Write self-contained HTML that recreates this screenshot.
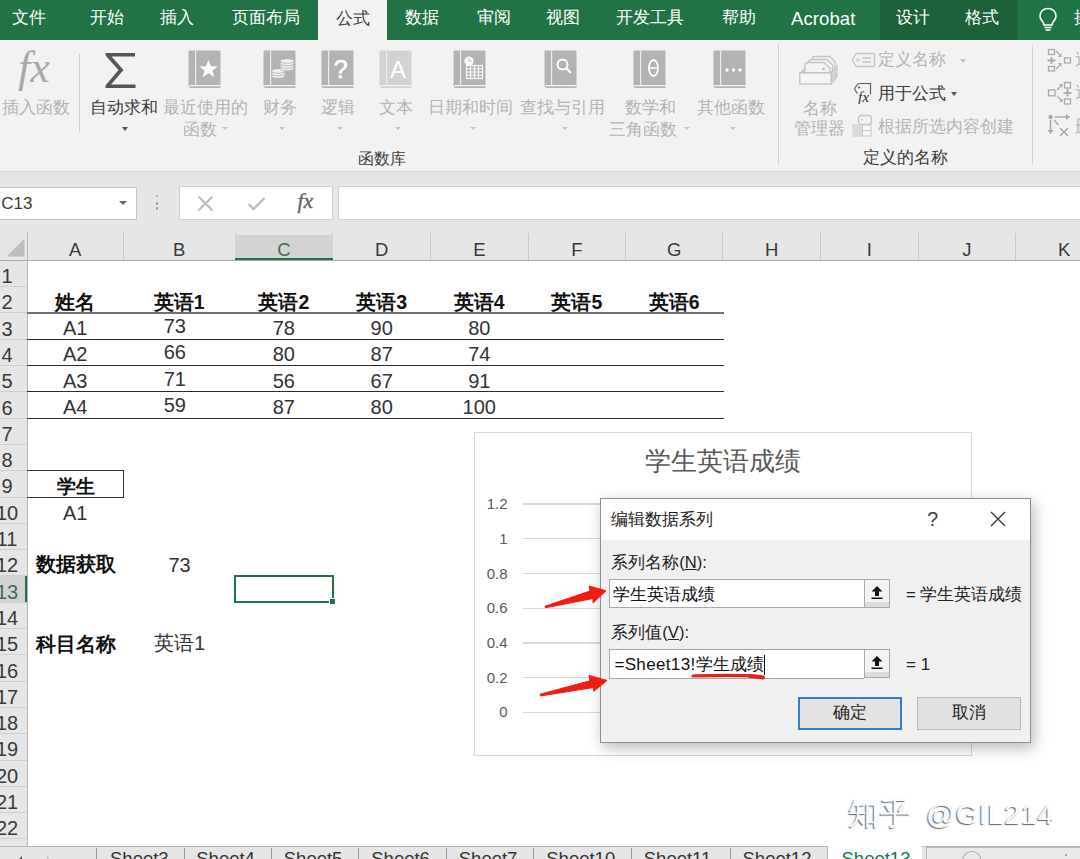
<!DOCTYPE html>
<html><head><meta charset="utf-8"><style>
html,body{margin:0;padding:0;}
body{width:1080px;height:859px;overflow:hidden;position:relative;background:#fff;font-family:'Liberation Sans',sans-serif;}
</style></head><body>
<div style="position:absolute;left:0px;top:0px;width:1080px;height:40px;background:#217346"></div>
<div style="position:absolute;left:879.5px;top:0px;width:137.5px;height:40px;background:#1c6139"></div>
<div style="position:absolute;left:318px;top:0px;width:69px;height:41px;background:#f3f2f2"></div>
<div style="position:absolute;left:11.7px;top:8.10px;font-size:17px;line-height:20.40px;color:#fff;font-weight:normal;white-space:nowrap;">文件</div>
<div style="position:absolute;left:90px;top:8.10px;font-size:17px;line-height:20.40px;color:#fff;font-weight:normal;white-space:nowrap;">开始</div>
<div style="position:absolute;left:160px;top:8.10px;font-size:17px;line-height:20.40px;color:#fff;font-weight:normal;white-space:nowrap;">插入</div>
<div style="position:absolute;left:231.7px;top:8.10px;font-size:17px;line-height:20.40px;color:#fff;font-weight:normal;white-space:nowrap;">页面布局</div>
<div style="position:absolute;left:405px;top:8.10px;font-size:17px;line-height:20.40px;color:#fff;font-weight:normal;white-space:nowrap;">数据</div>
<div style="position:absolute;left:476.7px;top:8.10px;font-size:17px;line-height:20.40px;color:#fff;font-weight:normal;white-space:nowrap;">审阅</div>
<div style="position:absolute;left:546px;top:8.10px;font-size:17px;line-height:20.40px;color:#fff;font-weight:normal;white-space:nowrap;">视图</div>
<div style="position:absolute;left:616px;top:8.10px;font-size:17px;line-height:20.40px;color:#fff;font-weight:normal;white-space:nowrap;">开发工具</div>
<div style="position:absolute;left:721.7px;top:8.10px;font-size:17px;line-height:20.40px;color:#fff;font-weight:normal;white-space:nowrap;">帮助</div>
<div style="position:absolute;left:895.7px;top:8.10px;font-size:17px;line-height:20.40px;color:#fff;font-weight:normal;white-space:nowrap;">设计</div>
<div style="position:absolute;left:965px;top:8.10px;font-size:17px;line-height:20.40px;color:#fff;font-weight:normal;white-space:nowrap;">格式</div>
<div style="position:absolute;left:1074px;top:8.10px;font-size:17px;line-height:20.40px;color:#fff;font-weight:normal;white-space:nowrap;">操</div>
<div style="position:absolute;left:791px;top:7.70px;font-size:18.5px;line-height:22.20px;color:#fff;font-weight:normal;white-space:nowrap;letter-spacing:0.1px;">Acrobat</div>
<div style="position:absolute;left:335.5px;top:9.40px;font-size:16.5px;line-height:19.80px;color:#3a4a42;font-weight:normal;white-space:nowrap;">公式</div>
<svg style="position:absolute;left:1038px;top:7px;" width="20" height="24" viewBox="0 0 20 24"><path d="M10 1.5 C5 1.5 2 5 2 9 C2 12.5 4.5 14 5.5 16 L6 18 L14 18 L14.5 16 C15.5 14 18 12.5 18 9 C18 5 15 1.5 10 1.5 Z" fill="none" stroke="#fff" stroke-width="1.6"/><path d="M6.5 20.5 H13.5 M7.5 23 H12.5" stroke="#fff" stroke-width="1.6"/></svg>
<div style="position:absolute;left:0px;top:40px;width:1080px;height:131px;background:#f3f2f2"></div>
<div style="position:absolute;left:0px;top:171px;width:1080px;height:1px;background:#d5d5d5"></div>
<div style="position:absolute;left:18px;top:41.60px;font-size:44px;line-height:52.80px;color:#a8a8a8;font-weight:normal;white-space:nowrap;font-family:'Liberation Serif',serif;"><i>fx</i></div>
<div style="position:absolute;left:1.7px;top:97.80px;font-size:17px;line-height:20.40px;color:#b4b4b4;font-weight:normal;white-space:nowrap;">插入函数</div>
<div style="position:absolute;left:79px;top:54px;width:1px;height:78px;background:#d2d2d2"></div>
<svg style="position:absolute;left:104px;top:52px;" width="33" height="37" viewBox="0 0 33 37"><path d="M1.5 1 H31 V4.5 H7.5 L19.5 18 L7 32.5 H31.5 V36 H1.5 V33.5 L14.5 18 L1.5 3.5 Z" fill="#555"/></svg>
<div style="position:absolute;left:90px;top:98.10px;font-size:16.5px;line-height:19.80px;color:#3c3c3c;font-weight:normal;white-space:nowrap;">自动求和</div>
<div style="position:absolute;left:121.5px;top:126.5px;width:0;height:0;border-left:3.5px solid transparent;border-right:3.5px solid transparent;border-top:4px solid #555;"></div>
<svg style="position:absolute;left:187.5px;top:50px;" width="33" height="39" viewBox="0 0 33 39"><rect x="0.5" y="0.5" width="32" height="36" rx="1" fill="#b3b3b3"/><rect x="7" y="0.5" width="1.2" height="36" fill="#ececec"/><rect x="1.5" y="35" width="31" height="1.3" fill="#f4f4f4"/><rect x="1.5" y="36.5" width="31" height="1.5" fill="#b3b3b3"/><path d="M20.5 10 L23 16.3 L29.5 16.5 L24.5 20.6 L26.3 27 L20.5 23.3 L14.7 27 L16.5 20.6 L11.5 16.5 L18 16.3 Z" fill="#fff"/></svg>
<svg style="position:absolute;left:263px;top:50px;" width="33" height="39" viewBox="0 0 33 39"><rect x="0.5" y="0.5" width="32" height="36" rx="1" fill="#b3b3b3"/><rect x="7" y="0.5" width="1.2" height="36" fill="#ececec"/><rect x="1.5" y="35" width="31" height="1.3" fill="#f4f4f4"/><rect x="1.5" y="36.5" width="31" height="1.5" fill="#b3b3b3"/><ellipse cx="15.3" cy="26" rx="6.8" ry="2.3" fill="#f2f2f2" stroke="#b3b3b3" stroke-width="0.9"/><ellipse cx="15.3" cy="23.5" rx="6.8" ry="2.3" fill="#f2f2f2" stroke="#b3b3b3" stroke-width="0.9"/><ellipse cx="15.3" cy="21" rx="6.8" ry="2.3" fill="#f2f2f2" stroke="#b3b3b3" stroke-width="0.9"/><ellipse cx="24" cy="18.5" rx="7" ry="2.3" fill="#f2f2f2" stroke="#b3b3b3" stroke-width="0.9"/><ellipse cx="24" cy="16" rx="7" ry="2.3" fill="#f2f2f2" stroke="#b3b3b3" stroke-width="0.9"/><ellipse cx="24" cy="13.5" rx="7" ry="2.3" fill="#f2f2f2" stroke="#b3b3b3" stroke-width="0.9"/><ellipse cx="24" cy="11" rx="7" ry="2.3" fill="#f2f2f2" stroke="#b3b3b3" stroke-width="0.9"/></svg>
<svg style="position:absolute;left:320.8px;top:50px;" width="33" height="39" viewBox="0 0 33 39"><rect x="0.5" y="0.5" width="32" height="36" rx="1" fill="#b3b3b3"/><rect x="7" y="0.5" width="1.2" height="36" fill="#ececec"/><rect x="1.5" y="35" width="31" height="1.3" fill="#f4f4f4"/><rect x="1.5" y="36.5" width="31" height="1.5" fill="#b3b3b3"/><text x="19.6" y="28" font-family="Liberation Sans" font-weight="normal" font-size="25" fill="#fff" stroke="#fff" stroke-width="0.6" text-anchor="middle">?</text></svg>
<svg style="position:absolute;left:379px;top:50px;" width="33" height="39" viewBox="0 0 33 39"><rect x="0.5" y="0.5" width="32" height="36" rx="1" fill="#d2d2d2"/><rect x="7" y="0.5" width="1.2" height="36" fill="#ececec"/><rect x="1.5" y="35" width="31" height="1.3" fill="#f4f4f4"/><rect x="1.5" y="36.5" width="31" height="1.5" fill="#d2d2d2"/><text x="19" y="27.8" font-family="Liberation Sans" font-size="24" fill="#fff" text-anchor="middle">A</text></svg>
<svg style="position:absolute;left:453.3px;top:50px;" width="33" height="39" viewBox="0 0 33 39"><rect x="0.5" y="0.5" width="32" height="36" rx="1" fill="#b3b3b3"/><rect x="7" y="0.5" width="1.2" height="36" fill="#ececec"/><rect x="1.5" y="35" width="31" height="1.3" fill="#f4f4f4"/><rect x="1.5" y="36.5" width="31" height="1.5" fill="#b3b3b3"/><g stroke="#fff" stroke-width="1.1" fill="none"><rect x="13.5" y="15.5" width="16" height="13"/><path d="M13.5 18.8 H29.5 M13.5 22 H29.5 M13.5 25.2 H29.5 M17.5 15.5 V28.5 M21.5 15.5 V28.5 M25.5 15.5 V28.5"/></g><circle cx="16" cy="11" r="4.6" fill="#fff"/><path d="M16 8 V11 H18.5" stroke="#b3b3b3" stroke-width="1" fill="none"/></svg>
<svg style="position:absolute;left:544px;top:50px;" width="33" height="39" viewBox="0 0 33 39"><rect x="0.5" y="0.5" width="32" height="36" rx="1" fill="#b3b3b3"/><rect x="7" y="0.5" width="1.2" height="36" fill="#ececec"/><rect x="1.5" y="35" width="31" height="1.3" fill="#f4f4f4"/><rect x="1.5" y="36.5" width="31" height="1.5" fill="#b3b3b3"/><circle cx="18.5" cy="14.5" r="5" fill="none" stroke="#fff" stroke-width="2"/><path d="M22 18 L27 23" stroke="#fff" stroke-width="2.2"/></svg>
<svg style="position:absolute;left:633.3px;top:50px;" width="33" height="39" viewBox="0 0 33 39"><rect x="0.5" y="0.5" width="32" height="36" rx="1" fill="#b3b3b3"/><rect x="7" y="0.5" width="1.2" height="36" fill="#ececec"/><rect x="1.5" y="35" width="31" height="1.3" fill="#f4f4f4"/><rect x="1.5" y="36.5" width="31" height="1.5" fill="#b3b3b3"/><ellipse cx="20.5" cy="18" rx="4.5" ry="8" fill="none" stroke="#fff" stroke-width="1.8"/><path d="M16.5 18 H24.5" stroke="#fff" stroke-width="1.5"/></svg>
<svg style="position:absolute;left:713.3px;top:50px;" width="33" height="39" viewBox="0 0 33 39"><rect x="0.5" y="0.5" width="32" height="36" rx="1" fill="#b3b3b3"/><rect x="7" y="0.5" width="1.2" height="36" fill="#ececec"/><rect x="1.5" y="35" width="31" height="1.3" fill="#f4f4f4"/><rect x="1.5" y="36.5" width="31" height="1.5" fill="#b3b3b3"/><circle cx="14" cy="20" r="1.7" fill="#fff"/><circle cx="20.5" cy="20" r="1.7" fill="#fff"/><circle cx="27" cy="20" r="1.7" fill="#fff"/></svg>
<div style="position:absolute;left:162.5px;top:98.04px;font-size:16.6px;line-height:19.92px;color:#b4b4b4;font-weight:normal;white-space:nowrap;">最近使用的</div>
<div style="position:absolute;left:182.5px;top:119.70px;font-size:16.5px;line-height:19.80px;color:#b4b4b4;font-weight:normal;white-space:nowrap;">函数</div>
<div style="position:absolute;left:222.0px;top:126.8px;width:0;height:0;border-left:3.0px solid transparent;border-right:3.0px solid transparent;border-top:3.5px solid #c4c4c4;"></div>
<div style="position:absolute;left:263.3px;top:98.10px;font-size:16.5px;line-height:19.80px;color:#b4b4b4;font-weight:normal;white-space:nowrap;">财务</div>
<div style="position:absolute;left:279.0px;top:126.8px;width:0;height:0;border-left:3.0px solid transparent;border-right:3.0px solid transparent;border-top:3.5px solid #c4c4c4;"></div>
<div style="position:absolute;left:320.8px;top:98.10px;font-size:16.5px;line-height:19.80px;color:#b4b4b4;font-weight:normal;white-space:nowrap;">逻辑</div>
<div style="position:absolute;left:337.0px;top:126.8px;width:0;height:0;border-left:3.0px solid transparent;border-right:3.0px solid transparent;border-top:3.5px solid #c4c4c4;"></div>
<div style="position:absolute;left:379px;top:98.10px;font-size:16.5px;line-height:19.80px;color:#b4b4b4;font-weight:normal;white-space:nowrap;">文本</div>
<div style="position:absolute;left:395.0px;top:126.8px;width:0;height:0;border-left:3.0px solid transparent;border-right:3.0px solid transparent;border-top:3.5px solid #c4c4c4;"></div>
<div style="position:absolute;left:428px;top:97.98px;font-size:16.7px;line-height:20.04px;color:#b4b4b4;font-weight:normal;white-space:nowrap;">日期和时间</div>
<div style="position:absolute;left:469.5px;top:126.8px;width:0;height:0;border-left:3.0px solid transparent;border-right:3.0px solid transparent;border-top:3.5px solid #c4c4c4;"></div>
<div style="position:absolute;left:520px;top:98.10px;font-size:16.5px;line-height:19.80px;color:#b4b4b4;font-weight:normal;white-space:nowrap;">查找与引用</div>
<div style="position:absolute;left:561.7px;top:126.8px;width:0;height:0;border-left:3.0px solid transparent;border-right:3.0px solid transparent;border-top:3.5px solid #c4c4c4;"></div>
<div style="position:absolute;left:625px;top:98.10px;font-size:16.5px;line-height:19.80px;color:#b4b4b4;font-weight:normal;white-space:nowrap;">数学和</div>
<div style="position:absolute;left:609px;top:119.58px;font-size:16.7px;line-height:20.04px;color:#b4b4b4;font-weight:normal;white-space:nowrap;">三角函数</div>
<div style="position:absolute;left:683.7px;top:126.8px;width:0;height:0;border-left:3.0px solid transparent;border-right:3.0px solid transparent;border-top:3.5px solid #c4c4c4;"></div>
<div style="position:absolute;left:696.7px;top:98.04px;font-size:16.6px;line-height:19.92px;color:#b4b4b4;font-weight:normal;white-space:nowrap;">其他函数</div>
<div style="position:absolute;left:730.3px;top:126.8px;width:0;height:0;border-left:3.0px solid transparent;border-right:3.0px solid transparent;border-top:3.5px solid #c4c4c4;"></div>
<div style="position:absolute;left:357.5px;top:149.36px;font-size:16.4px;line-height:19.68px;color:#3c3c3c;font-weight:normal;white-space:nowrap;">函数库</div>
<div style="position:absolute;left:778px;top:44px;width:1px;height:121px;background:#d2d2d2"></div>
<svg style="position:absolute;left:795px;top:50px;" width="45" height="38" viewBox="0 0 45 38"><g fill="#f4f3f4" stroke="#c4c4c4" stroke-width="1.3" stroke-linejoin="round"><path d="M17 20 V9.5 Q17 6.5 20 6.5 H35 L40 12 V20 Z"/><path d="M13.5 22 V12.5 Q13.5 9.5 16.5 9.5 H32 L37.5 15 V22 Z"/><path d="M10 23 V15.5 Q10 12.5 13 12.5 H29 L35 18.5 V23 Z"/></g><circle cx="28.5" cy="19" r="1.3" fill="#b5b5b5"/><path d="M5 23 L9.5 17.5 V23 Z" fill="#c4c4c4"/><rect x="4.8" y="23" width="31.5" height="11" fill="#f6f5f6" stroke="#c4c4c4" stroke-width="1.3"/><path d="M36.3 23 L42 15.5 V27.5 L36.3 34 Z" fill="#d2d2d2" stroke="#c4c4c4" stroke-width="1"/></svg>
<div style="position:absolute;left:802.5px;top:98.54px;font-size:16.6px;line-height:19.92px;color:#b4b4b4;font-weight:normal;white-space:nowrap;">名称</div>
<div style="position:absolute;left:794px;top:118.54px;font-size:16.6px;line-height:19.92px;color:#b4b4b4;font-weight:normal;white-space:nowrap;">管理器</div>
<svg style="position:absolute;left:851px;top:52px;" width="25" height="17" viewBox="0 0 25 17"><path d="M7 1.5 H22 Q23.5 1.5 23.5 3 V13 Q23.5 14.5 22 14.5 H7 Q5.5 14.5 4.5 13.5 L1.8 9 Q1.3 8 1.8 7 L4.5 2.5 Q5.5 1.5 7 1.5 Z" fill="none" stroke="#c6c6c6" stroke-width="1.4"/><circle cx="6.8" cy="8" r="1.3" fill="none" stroke="#c6c6c6" stroke-width="1"/><path d="M11 6 H20 M11 10 H20" stroke="#c6c6c6" stroke-width="1.3"/></svg>
<div style="position:absolute;left:878.3px;top:50.42px;font-size:16.8px;line-height:20.16px;color:#b4b4b4;font-weight:normal;white-space:nowrap;">定义名称</div>
<div style="position:absolute;left:959.5px;top:58.5px;width:0;height:0;border-left:3.5px solid transparent;border-right:3.5px solid transparent;border-top:4px solid #c4c4c4;"></div>
<svg style="position:absolute;left:853px;top:81px;" width="22" height="23" viewBox="0 0 22 23"><path d="M17.5 13.5 V2.5 H6.5 Q5 2.5 4 4 L2 7 Q1.5 8 2 9 L4.5 12.5" fill="none" stroke="#5a5a5a" stroke-width="1.2"/><circle cx="6" cy="6.5" r="1.1" fill="#5a5a5a"/><text x="5" y="20.5" font-family="Liberation Serif" font-style="italic" font-size="15.5" fill="#333">fx</text></svg>
<div style="position:absolute;left:878.3px;top:84.22px;font-size:16.8px;line-height:20.16px;color:#3c3c3c;font-weight:normal;white-space:nowrap;">用于公式</div>
<div style="position:absolute;left:950.5px;top:91.5px;width:0;height:0;border-left:3.5px solid transparent;border-right:3.5px solid transparent;border-top:4px solid #555;"></div>
<svg style="position:absolute;left:852px;top:114px;" width="22" height="24" viewBox="0 0 22 24"><rect x="6.5" y="1.5" width="13" height="9" rx="3" fill="#f3f3f3" stroke="#c6c6c6" stroke-width="1.3"/><circle cx="9.8" cy="5.5" r="1" fill="#c6c6c6"/><rect x="1" y="11" width="18" height="11" fill="#f6f6f6" stroke="#c8c8c8" stroke-width="1"/><rect x="1.5" y="11.5" width="9" height="10" fill="#d9d9d9"/><path d="M10.5 11 V22 M10.5 16.5 H19" stroke="#c8c8c8" stroke-width="1"/></svg>
<div style="position:absolute;left:878px;top:117.42px;font-size:16.8px;line-height:20.16px;color:#b4b4b4;font-weight:normal;white-space:nowrap;">根据所选内容创建</div>
<div style="position:absolute;left:862.5px;top:148.22px;font-size:16.8px;line-height:20.16px;color:#3c3c3c;font-weight:normal;white-space:nowrap;">定义的名称</div>
<div style="position:absolute;left:1032px;top:45px;width:1px;height:120px;background:#d2d2d2"></div>
<svg style="position:absolute;left:1044px;top:44px;" width="31" height="96" viewBox="0 0 31 96"><g fill="none" stroke="#a9a9a9" stroke-width="1.3"><rect x="4.5" y="5.5" width="6" height="5"/><rect x="4.5" y="22.5" width="6" height="4.5"/><rect x="20.5" y="14" width="6" height="5"/><path d="M3.5 16.5 H11.5 M7.5 13 V20" stroke-width="1.8"/><path d="M12 7 L17 12 M12 25 L17 20"/><rect x="4.5" y="46" width="6.5" height="5.8"/><rect x="20.5" y="38.5" width="6" height="5.5"/><rect x="20.5" y="55" width="6" height="5"/><path d="M19.5 48.8 H27.5 M23.5 45 V52.5" stroke-width="1.8"/><path d="M13 46 L18 41 M13 52 L18 57"/><path d="M11 73 H23 M6.5 76 V88 M10 76 L14.5 81 M16 84 L24 92 M24 84 L16 92" stroke-width="1.5"/></g><g fill="#a9a9a9"><path d="M17.5 9.5 V13 H14 Z M17.5 22.5 V19 H14 Z M18.5 43.5 V40 H15 Z M18.5 54.5 V58 H15 Z M22 70 L26 73 L22 76 Z M3.5 86 H9.5 L6.5 90 Z"/><circle cx="6.5" cy="73" r="2.2"/></g></svg>
<div style="position:absolute;left:1075px;top:49.80px;font-size:17px;line-height:20.40px;color:#b4b4b4;font-weight:normal;white-space:nowrap;">追</div>
<div style="position:absolute;left:1075px;top:82.80px;font-size:17px;line-height:20.40px;color:#b4b4b4;font-weight:normal;white-space:nowrap;">追</div>
<div style="position:absolute;left:1075px;top:116.80px;font-size:17px;line-height:20.40px;color:#b4b4b4;font-weight:normal;white-space:nowrap;">删</div>
<div style="position:absolute;left:0px;top:172px;width:1080px;height:88px;background:#e6e6e6"></div>
<div style="position:absolute;left:-1px;top:186.5px;width:137.5px;height:33.5px;background:#fff;box-sizing:border-box;border:1px solid #c6c6c6"></div>
<div style="position:absolute;left:1.2px;top:194.10px;font-size:17px;line-height:20.40px;color:#3a3a3a;font-weight:normal;white-space:nowrap;">C13</div>
<div style="position:absolute;left:119.3px;top:200.8px;width:0;height:0;border-left:4.0px solid transparent;border-right:4.0px solid transparent;border-top:4.5px solid #666;"></div>
<div style="position:absolute;left:155.5px;top:194.8px;width:2.5px;height:2.5px;background:#9a9a9a;border-radius:50%"></div>
<div style="position:absolute;left:155.5px;top:202.3px;width:2.5px;height:2.5px;background:#9a9a9a;border-radius:50%"></div>
<div style="position:absolute;left:155.5px;top:207.3px;width:2.5px;height:2.5px;background:#9a9a9a;border-radius:50%"></div>
<div style="position:absolute;left:179.3px;top:186.3px;width:153.3px;height:34px;background:#fff;box-sizing:border-box;border:1px solid #d0d0d0"></div>
<svg style="position:absolute;left:197px;top:195px;" width="17" height="17" viewBox="0 0 17 17"><path d="M1.5 1.5 L15.5 15.5 M15.5 1.5 L1.5 15.5" stroke="#b9b9b9" stroke-width="1.8"/></svg>
<svg style="position:absolute;left:247px;top:196px;" width="19" height="15" viewBox="0 0 19 15"><path d="M1.5 8 L6.5 13 L17.5 2" fill="none" stroke="#bdbdbd" stroke-width="2.4"/></svg>
<div style="position:absolute;left:297.5px;top:188.90px;font-size:21.5px;line-height:25.80px;color:#666;font-weight:normal;white-space:nowrap;font-family:'Liberation Serif',serif;-webkit-text-stroke:0.4px #666;"><i>fx</i></div>
<div style="position:absolute;left:337.6px;top:186.3px;width:750px;height:34px;background:#fff;box-sizing:border-box;border:1px solid #d0d0d0"></div>
<div style="position:absolute;left:27.5px;top:260.8px;width:1060px;height:585px;background:#fff"></div>
<div style="position:absolute;left:122.9px;top:233px;width:1px;height:27px;background:#c9c9c9"></div>
<div style="position:absolute;left:234.5px;top:233px;width:1px;height:27px;background:#c9c9c9"></div>
<div style="position:absolute;left:332.2px;top:233px;width:1px;height:27px;background:#c9c9c9"></div>
<div style="position:absolute;left:430.1px;top:233px;width:1px;height:27px;background:#c9c9c9"></div>
<div style="position:absolute;left:527.5px;top:233px;width:1px;height:27px;background:#c9c9c9"></div>
<div style="position:absolute;left:625.2px;top:233px;width:1px;height:27px;background:#c9c9c9"></div>
<div style="position:absolute;left:722.4px;top:233px;width:1px;height:27px;background:#c9c9c9"></div>
<div style="position:absolute;left:819.8px;top:233px;width:1px;height:27px;background:#c9c9c9"></div>
<div style="position:absolute;left:917.7px;top:233px;width:1px;height:27px;background:#c9c9c9"></div>
<div style="position:absolute;left:1014.9px;top:233px;width:1px;height:27px;background:#c9c9c9"></div>
<div style="position:absolute;left:235px;top:235px;width:97.7px;height:25px;background:#d3d3d3"></div>
<div style="position:absolute;left:235px;top:258.3px;width:97.7px;height:2px;background:#217346"></div>
<div style="position:absolute;left:45.2px;top:238.90px;font-size:18.5px;line-height:22.20px;color:#3a3a3a;font-weight:normal;white-space:nowrap;width:60px;text-align:center;">A</div>
<div style="position:absolute;left:149.2px;top:238.90px;font-size:18.5px;line-height:22.20px;color:#3a3a3a;font-weight:normal;white-space:nowrap;width:60px;text-align:center;">B</div>
<div style="position:absolute;left:253.85000000000002px;top:238.90px;font-size:18.5px;line-height:22.20px;color:#3b6e55;font-weight:normal;white-space:nowrap;width:60px;text-align:center;">C</div>
<div style="position:absolute;left:351.65px;top:238.90px;font-size:18.5px;line-height:22.20px;color:#3a3a3a;font-weight:normal;white-space:nowrap;width:60px;text-align:center;">D</div>
<div style="position:absolute;left:449.3px;top:238.90px;font-size:18.5px;line-height:22.20px;color:#3a3a3a;font-weight:normal;white-space:nowrap;width:60px;text-align:center;">E</div>
<div style="position:absolute;left:546.85px;top:238.90px;font-size:18.5px;line-height:22.20px;color:#3a3a3a;font-weight:normal;white-space:nowrap;width:60px;text-align:center;">F</div>
<div style="position:absolute;left:644.3px;top:238.90px;font-size:18.5px;line-height:22.20px;color:#3a3a3a;font-weight:normal;white-space:nowrap;width:60px;text-align:center;">G</div>
<div style="position:absolute;left:741.5999999999999px;top:238.90px;font-size:18.5px;line-height:22.20px;color:#3a3a3a;font-weight:normal;white-space:nowrap;width:60px;text-align:center;">H</div>
<div style="position:absolute;left:839.25px;top:238.90px;font-size:18.5px;line-height:22.20px;color:#3a3a3a;font-weight:normal;white-space:nowrap;width:60px;text-align:center;">I</div>
<div style="position:absolute;left:936.8px;top:238.90px;font-size:18.5px;line-height:22.20px;color:#3a3a3a;font-weight:normal;white-space:nowrap;width:60px;text-align:center;">J</div>
<div style="position:absolute;left:1034.2px;top:238.90px;font-size:18.5px;line-height:22.20px;color:#3a3a3a;font-weight:normal;white-space:nowrap;width:60px;text-align:center;">K</div>
<div style="position:absolute;left:0px;top:259.8px;width:1080px;height:1px;background:#a8a8a8"></div>
<svg style="position:absolute;left:6px;top:238px;" width="19" height="19" viewBox="0 0 19 19"><path d="M18.5 0.5 V18.5 H0.5 Z" fill="#bdbdbd"/></svg>
<div style="position:absolute;left:0px;top:260.8px;width:27px;height:585px;background:#e6e6e6"></div>
<div style="position:absolute;left:26.6px;top:232px;width:1px;height:614px;background:#b5b5b5"></div>
<div style="position:absolute;left:0px;top:286.1px;width:26.6px;height:1px;background:#cfcfcf"></div>
<div style="position:absolute;left:-22px;top:264.05px;font-size:20px;line-height:24.00px;color:#3a3a3a;font-weight:normal;white-space:nowrap;width:58px;text-align:center;">1</div>
<div style="position:absolute;left:0px;top:312.40000000000003px;width:26.6px;height:1px;background:#cfcfcf"></div>
<div style="position:absolute;left:-22px;top:290.35px;font-size:20px;line-height:24.00px;color:#3a3a3a;font-weight:normal;white-space:nowrap;width:58px;text-align:center;">2</div>
<div style="position:absolute;left:0px;top:338.70000000000005px;width:26.6px;height:1px;background:#cfcfcf"></div>
<div style="position:absolute;left:-22px;top:316.65px;font-size:20px;line-height:24.00px;color:#3a3a3a;font-weight:normal;white-space:nowrap;width:58px;text-align:center;">3</div>
<div style="position:absolute;left:0px;top:365.00000000000006px;width:26.6px;height:1px;background:#cfcfcf"></div>
<div style="position:absolute;left:-22px;top:342.95px;font-size:20px;line-height:24.00px;color:#3a3a3a;font-weight:normal;white-space:nowrap;width:58px;text-align:center;">4</div>
<div style="position:absolute;left:0px;top:391.3px;width:26.6px;height:1px;background:#cfcfcf"></div>
<div style="position:absolute;left:-22px;top:369.25px;font-size:20px;line-height:24.00px;color:#3a3a3a;font-weight:normal;white-space:nowrap;width:58px;text-align:center;">5</div>
<div style="position:absolute;left:0px;top:417.6px;width:26.6px;height:1px;background:#cfcfcf"></div>
<div style="position:absolute;left:-22px;top:395.55px;font-size:20px;line-height:24.00px;color:#3a3a3a;font-weight:normal;white-space:nowrap;width:58px;text-align:center;">6</div>
<div style="position:absolute;left:0px;top:443.90000000000003px;width:26.6px;height:1px;background:#cfcfcf"></div>
<div style="position:absolute;left:-22px;top:421.85px;font-size:20px;line-height:24.00px;color:#3a3a3a;font-weight:normal;white-space:nowrap;width:58px;text-align:center;">7</div>
<div style="position:absolute;left:0px;top:470.2px;width:26.6px;height:1px;background:#cfcfcf"></div>
<div style="position:absolute;left:-22px;top:448.15px;font-size:20px;line-height:24.00px;color:#3a3a3a;font-weight:normal;white-space:nowrap;width:58px;text-align:center;">8</div>
<div style="position:absolute;left:0px;top:496.50000000000006px;width:26.6px;height:1px;background:#cfcfcf"></div>
<div style="position:absolute;left:-22px;top:474.45px;font-size:20px;line-height:24.00px;color:#3a3a3a;font-weight:normal;white-space:nowrap;width:58px;text-align:center;">9</div>
<div style="position:absolute;left:0px;top:522.8px;width:26.6px;height:1px;background:#cfcfcf"></div>
<div style="position:absolute;left:-22px;top:500.75px;font-size:20px;line-height:24.00px;color:#3a3a3a;font-weight:normal;white-space:nowrap;width:58px;text-align:center;">10</div>
<div style="position:absolute;left:0px;top:549.0999999999999px;width:26.6px;height:1px;background:#cfcfcf"></div>
<div style="position:absolute;left:-22px;top:527.05px;font-size:20px;line-height:24.00px;color:#3a3a3a;font-weight:normal;white-space:nowrap;width:58px;text-align:center;">11</div>
<div style="position:absolute;left:0px;top:575.4px;width:26.6px;height:1px;background:#cfcfcf"></div>
<div style="position:absolute;left:-22px;top:553.35px;font-size:20px;line-height:24.00px;color:#3a3a3a;font-weight:normal;white-space:nowrap;width:58px;text-align:center;">12</div>
<div style="position:absolute;left:0px;top:575.9000000000001px;width:26.6px;height:26.3px;background:#d3d3d3"></div>
<div style="position:absolute;left:25px;top:575.9000000000001px;width:2px;height:26.3px;background:#217346"></div>
<div style="position:absolute;left:0px;top:601.7px;width:26.6px;height:1px;background:#cfcfcf"></div>
<div style="position:absolute;left:-22px;top:579.65px;font-size:20px;line-height:24.00px;color:#3b6e55;font-weight:normal;white-space:nowrap;width:58px;text-align:center;">13</div>
<div style="position:absolute;left:0px;top:628.0px;width:26.6px;height:1px;background:#cfcfcf"></div>
<div style="position:absolute;left:-22px;top:605.95px;font-size:20px;line-height:24.00px;color:#3a3a3a;font-weight:normal;white-space:nowrap;width:58px;text-align:center;">14</div>
<div style="position:absolute;left:0px;top:654.3px;width:26.6px;height:1px;background:#cfcfcf"></div>
<div style="position:absolute;left:-22px;top:632.25px;font-size:20px;line-height:24.00px;color:#3a3a3a;font-weight:normal;white-space:nowrap;width:58px;text-align:center;">15</div>
<div style="position:absolute;left:0px;top:680.5999999999999px;width:26.6px;height:1px;background:#cfcfcf"></div>
<div style="position:absolute;left:-22px;top:658.55px;font-size:20px;line-height:24.00px;color:#3a3a3a;font-weight:normal;white-space:nowrap;width:58px;text-align:center;">16</div>
<div style="position:absolute;left:0px;top:706.9px;width:26.6px;height:1px;background:#cfcfcf"></div>
<div style="position:absolute;left:-22px;top:684.85px;font-size:20px;line-height:24.00px;color:#3a3a3a;font-weight:normal;white-space:nowrap;width:58px;text-align:center;">17</div>
<div style="position:absolute;left:0px;top:733.2px;width:26.6px;height:1px;background:#cfcfcf"></div>
<div style="position:absolute;left:-22px;top:711.15px;font-size:20px;line-height:24.00px;color:#3a3a3a;font-weight:normal;white-space:nowrap;width:58px;text-align:center;">18</div>
<div style="position:absolute;left:0px;top:759.5px;width:26.6px;height:1px;background:#cfcfcf"></div>
<div style="position:absolute;left:-22px;top:737.45px;font-size:20px;line-height:24.00px;color:#3a3a3a;font-weight:normal;white-space:nowrap;width:58px;text-align:center;">19</div>
<div style="position:absolute;left:0px;top:785.8px;width:26.6px;height:1px;background:#cfcfcf"></div>
<div style="position:absolute;left:-22px;top:763.75px;font-size:20px;line-height:24.00px;color:#3a3a3a;font-weight:normal;white-space:nowrap;width:58px;text-align:center;">20</div>
<div style="position:absolute;left:0px;top:812.0999999999999px;width:26.6px;height:1px;background:#cfcfcf"></div>
<div style="position:absolute;left:-22px;top:790.05px;font-size:20px;line-height:24.00px;color:#3a3a3a;font-weight:normal;white-space:nowrap;width:58px;text-align:center;">21</div>
<div style="position:absolute;left:0px;top:838.4000000000001px;width:26.6px;height:1px;background:#cfcfcf"></div>
<div style="position:absolute;left:-22px;top:816.35px;font-size:20px;line-height:24.00px;color:#3a3a3a;font-weight:normal;white-space:nowrap;width:58px;text-align:center;">22</div>
<div style="position:absolute;left:27px;top:312.1px;width:696.5px;height:1.6px;background:#707070"></div>
<div style="position:absolute;left:27px;top:338.6px;width:696.5px;height:1.3px;background:#2c2c2c"></div>
<div style="position:absolute;left:27px;top:364.9px;width:696.5px;height:1.3px;background:#2c2c2c"></div>
<div style="position:absolute;left:27px;top:391.2px;width:696.5px;height:1.3px;background:#2c2c2c"></div>
<div style="position:absolute;left:27px;top:417.5px;width:696.5px;height:1.3px;background:#2c2c2c"></div>
<div style="position:absolute;left:25.200000000000003px;top:290.55px;font-size:19.5px;line-height:23.40px;color:#111;font-weight:bold;white-space:nowrap;width:100px;text-align:center;">姓名</div>
<div style="position:absolute;left:129.2px;top:290.55px;font-size:19.5px;line-height:23.40px;color:#111;font-weight:bold;white-space:nowrap;width:100px;text-align:center;">英语1</div>
<div style="position:absolute;left:233.85000000000002px;top:290.55px;font-size:19.5px;line-height:23.40px;color:#111;font-weight:bold;white-space:nowrap;width:100px;text-align:center;">英语2</div>
<div style="position:absolute;left:331.65px;top:290.55px;font-size:19.5px;line-height:23.40px;color:#111;font-weight:bold;white-space:nowrap;width:100px;text-align:center;">英语3</div>
<div style="position:absolute;left:429.3px;top:290.55px;font-size:19.5px;line-height:23.40px;color:#111;font-weight:bold;white-space:nowrap;width:100px;text-align:center;">英语4</div>
<div style="position:absolute;left:526.85px;top:290.55px;font-size:19.5px;line-height:23.40px;color:#111;font-weight:bold;white-space:nowrap;width:100px;text-align:center;">英语5</div>
<div style="position:absolute;left:624.3px;top:290.55px;font-size:19.5px;line-height:23.40px;color:#111;font-weight:bold;white-space:nowrap;width:100px;text-align:center;">英语6</div>
<div style="position:absolute;left:25.200000000000003px;top:316.05px;font-size:20px;line-height:24.00px;color:#333;font-weight:normal;white-space:nowrap;width:100px;text-align:center;">A1</div>
<div style="position:absolute;left:124.79999999999998px;top:314.05px;font-size:20px;line-height:24.00px;color:#333;font-weight:normal;white-space:nowrap;width:100px;text-align:center;">73</div>
<div style="position:absolute;left:233.85000000000002px;top:316.05px;font-size:20px;line-height:24.00px;color:#333;font-weight:normal;white-space:nowrap;width:100px;text-align:center;">78</div>
<div style="position:absolute;left:331.65px;top:316.05px;font-size:20px;line-height:24.00px;color:#333;font-weight:normal;white-space:nowrap;width:100px;text-align:center;">90</div>
<div style="position:absolute;left:429.3px;top:316.05px;font-size:20px;line-height:24.00px;color:#333;font-weight:normal;white-space:nowrap;width:100px;text-align:center;">80</div>
<div style="position:absolute;left:25.200000000000003px;top:342.35px;font-size:20px;line-height:24.00px;color:#333;font-weight:normal;white-space:nowrap;width:100px;text-align:center;">A2</div>
<div style="position:absolute;left:124.79999999999998px;top:340.35px;font-size:20px;line-height:24.00px;color:#333;font-weight:normal;white-space:nowrap;width:100px;text-align:center;">66</div>
<div style="position:absolute;left:233.85000000000002px;top:342.35px;font-size:20px;line-height:24.00px;color:#333;font-weight:normal;white-space:nowrap;width:100px;text-align:center;">80</div>
<div style="position:absolute;left:331.65px;top:342.35px;font-size:20px;line-height:24.00px;color:#333;font-weight:normal;white-space:nowrap;width:100px;text-align:center;">87</div>
<div style="position:absolute;left:429.3px;top:342.35px;font-size:20px;line-height:24.00px;color:#333;font-weight:normal;white-space:nowrap;width:100px;text-align:center;">74</div>
<div style="position:absolute;left:25.200000000000003px;top:368.65px;font-size:20px;line-height:24.00px;color:#333;font-weight:normal;white-space:nowrap;width:100px;text-align:center;">A3</div>
<div style="position:absolute;left:124.79999999999998px;top:366.65px;font-size:20px;line-height:24.00px;color:#333;font-weight:normal;white-space:nowrap;width:100px;text-align:center;">71</div>
<div style="position:absolute;left:233.85000000000002px;top:368.65px;font-size:20px;line-height:24.00px;color:#333;font-weight:normal;white-space:nowrap;width:100px;text-align:center;">56</div>
<div style="position:absolute;left:331.65px;top:368.65px;font-size:20px;line-height:24.00px;color:#333;font-weight:normal;white-space:nowrap;width:100px;text-align:center;">67</div>
<div style="position:absolute;left:429.3px;top:368.65px;font-size:20px;line-height:24.00px;color:#333;font-weight:normal;white-space:nowrap;width:100px;text-align:center;">91</div>
<div style="position:absolute;left:25.200000000000003px;top:394.95px;font-size:20px;line-height:24.00px;color:#333;font-weight:normal;white-space:nowrap;width:100px;text-align:center;">A4</div>
<div style="position:absolute;left:124.79999999999998px;top:392.95px;font-size:20px;line-height:24.00px;color:#333;font-weight:normal;white-space:nowrap;width:100px;text-align:center;">59</div>
<div style="position:absolute;left:233.85000000000002px;top:394.95px;font-size:20px;line-height:24.00px;color:#333;font-weight:normal;white-space:nowrap;width:100px;text-align:center;">87</div>
<div style="position:absolute;left:331.65px;top:394.95px;font-size:20px;line-height:24.00px;color:#333;font-weight:normal;white-space:nowrap;width:100px;text-align:center;">80</div>
<div style="position:absolute;left:429.3px;top:394.95px;font-size:20px;line-height:24.00px;color:#333;font-weight:normal;white-space:nowrap;width:100px;text-align:center;">100</div>
<div style="position:absolute;left:27px;top:470.40000000000003px;width:97px;height:27.8px;box-sizing:border-box;border:1.4px solid #333;border-left:none"></div>
<div style="position:absolute;left:25.799999999999997px;top:476.05px;font-size:19px;line-height:22.80px;color:#111;font-weight:bold;white-space:nowrap;width:100px;text-align:center;">学生</div>
<div style="position:absolute;left:25.200000000000003px;top:500.65px;font-size:20px;line-height:24.00px;color:#333;font-weight:normal;white-space:nowrap;width:100px;text-align:center;">A1</div>
<div style="position:absolute;left:35.8px;top:553.05px;font-size:19.5px;line-height:23.40px;color:#111;font-weight:bold;white-space:nowrap;">数据获取</div>
<div style="position:absolute;left:129.6px;top:553.25px;font-size:20px;line-height:24.00px;color:#333;font-weight:normal;white-space:nowrap;width:100px;text-align:center;">73</div>
<div style="position:absolute;left:35.8px;top:632.95px;font-size:19.5px;line-height:23.40px;color:#111;font-weight:bold;white-space:nowrap;">科目名称</div>
<div style="position:absolute;left:154.3px;top:631.95px;font-size:19.5px;line-height:23.40px;color:#333;font-weight:normal;white-space:nowrap;">英语1</div>
<div style="position:absolute;left:234px;top:575.4000000000001px;width:99.5px;height:27.8px;box-sizing:border-box;border:2px solid #217346"></div>
<div style="position:absolute;left:328.5px;top:597.7px;width:7px;height:7px;background:#217346;border:1px solid #fff;box-sizing:border-box"></div>
<div style="position:absolute;left:474px;top:432px;width:497.5px;height:324px;box-sizing:border-box;border:1.3px solid #d9d9d9;background:#fff"></div>
<div style="position:absolute;left:644.8px;top:446.26px;font-size:25.9px;line-height:31.08px;color:#595959;font-weight:normal;white-space:nowrap;">学生英语成绩</div>
<div style="position:absolute;left:522.8px;top:503.40000000000003px;width:420px;height:1.4px;background:#d9d9d9"></div>
<div style="position:absolute;left:457px;top:495.10px;font-size:15px;line-height:18.00px;color:#595959;font-weight:normal;white-space:nowrap;width:50.5px;text-align:right;">1.2</div>
<div style="position:absolute;left:522.8px;top:538.1px;width:420px;height:1.4px;background:#d9d9d9"></div>
<div style="position:absolute;left:457px;top:529.80px;font-size:15px;line-height:18.00px;color:#595959;font-weight:normal;white-space:nowrap;width:50.5px;text-align:right;">1</div>
<div style="position:absolute;left:522.8px;top:572.8px;width:420px;height:1.4px;background:#d9d9d9"></div>
<div style="position:absolute;left:457px;top:564.50px;font-size:15px;line-height:18.00px;color:#595959;font-weight:normal;white-space:nowrap;width:50.5px;text-align:right;">0.8</div>
<div style="position:absolute;left:522.8px;top:607.5px;width:420px;height:1.4px;background:#d9d9d9"></div>
<div style="position:absolute;left:457px;top:599.20px;font-size:15px;line-height:18.00px;color:#595959;font-weight:normal;white-space:nowrap;width:50.5px;text-align:right;">0.6</div>
<div style="position:absolute;left:522.8px;top:642.2px;width:420px;height:1.4px;background:#d9d9d9"></div>
<div style="position:absolute;left:457px;top:633.90px;font-size:15px;line-height:18.00px;color:#595959;font-weight:normal;white-space:nowrap;width:50.5px;text-align:right;">0.4</div>
<div style="position:absolute;left:522.8px;top:676.9px;width:420px;height:1.4px;background:#d9d9d9"></div>
<div style="position:absolute;left:457px;top:668.60px;font-size:15px;line-height:18.00px;color:#595959;font-weight:normal;white-space:nowrap;width:50.5px;text-align:right;">0.2</div>
<div style="position:absolute;left:522.8px;top:711.6px;width:420px;height:1.4px;background:#d9d9d9"></div>
<div style="position:absolute;left:457px;top:703.30px;font-size:15px;line-height:18.00px;color:#595959;font-weight:normal;white-space:nowrap;width:50.5px;text-align:right;">0</div>
<div style="position:absolute;left:600px;top:497.5px;width:430.5px;height:245.5px;box-sizing:border-box;border:1px solid #8f8f8f;background:#f0f0f0;box-shadow:3px 5px 14px rgba(0,0,0,0.28)"></div>
<div style="position:absolute;left:601px;top:498.5px;width:428.5px;height:41.5px;background:#fff"></div>
<div style="position:absolute;left:611.3px;top:509.54px;font-size:16.6px;line-height:19.92px;color:#222;font-weight:normal;white-space:nowrap;">编辑数据系列</div>
<div style="position:absolute;left:927.2px;top:508.30px;font-size:19.5px;line-height:23.40px;color:#3a3a3a;font-weight:normal;white-space:nowrap;">?</div>
<svg style="position:absolute;left:990px;top:511px;" width="16" height="16" viewBox="0 0 16 16"><path d="M1 1 L15 15 M15 1 L1 15" stroke="#333" stroke-width="1.3"/></svg>
<div style="position:absolute;left:611.3px;top:553.34px;font-size:16.6px;line-height:19.92px;color:#222;font-weight:normal;white-space:nowrap;">系列名称(<u>N</u>):</div>
<div style="position:absolute;left:609.3px;top:579.3px;width:254.5px;height:29px;background:#fff;box-sizing:border-box;border:1px solid #a9a9a9;border-right:none"></div>
<div style="position:absolute;left:613px;top:584.92px;font-size:16.8px;line-height:20.16px;color:#111;font-weight:normal;white-space:nowrap;">学生英语成绩</div>
<div style="position:absolute;left:863.5px;top:579.3px;width:26.5px;height:29px;background:#f3f3f3;box-sizing:border-box;border:1px solid #a9a9a9"></div>
<div style="position:absolute;left:864.5px;top:602.3px;width:24.5px;height:5px;background:#dcdcdc"></div>
<svg style="position:absolute;left:870.0px;top:585.3px;" width="14" height="15" viewBox="0 0 14 15"><path d="M7 1 L12.5 6.5 H9 V11 H5 V6.5 H1.5 Z" fill="#111"/><rect x="1.5" y="12.5" width="11" height="1.5" fill="#111"/></svg>
<div style="position:absolute;left:906px;top:584.92px;font-size:16.8px;line-height:20.16px;color:#222;font-weight:normal;white-space:nowrap;">= 学生英语成绩</div>
<div style="position:absolute;left:611.3px;top:623.04px;font-size:16.6px;line-height:19.92px;color:#222;font-weight:normal;white-space:nowrap;">系列值(<u>V</u>):</div>
<div style="position:absolute;left:609.3px;top:649.3px;width:254.5px;height:29.5px;background:#fff;box-sizing:border-box;border:1px solid #a9a9a9;border-right:none"></div>
<div style="position:absolute;left:614.4px;top:654.80px;font-size:17px;line-height:20.40px;color:#111;font-weight:normal;white-space:nowrap;"><span style="letter-spacing:0.35px">=Sheet13!</span>学生成绩</div>
<div style="position:absolute;left:764px;top:655px;width:1.2px;height:20px;background:#111"></div>
<div style="position:absolute;left:863.5px;top:649.3px;width:26.5px;height:29px;background:#f3f3f3;box-sizing:border-box;border:1px solid #a9a9a9"></div>
<div style="position:absolute;left:864.5px;top:672.3px;width:24.5px;height:5px;background:#dcdcdc"></div>
<svg style="position:absolute;left:870.0px;top:655.3px;" width="14" height="15" viewBox="0 0 14 15"><path d="M7 1 L12.5 6.5 H9 V11 H5 V6.5 H1.5 Z" fill="#111"/><rect x="1.5" y="12.5" width="11" height="1.5" fill="#111"/></svg>
<div style="position:absolute;left:906px;top:654.80px;font-size:17px;line-height:20.40px;color:#222;font-weight:normal;white-space:nowrap;">= 1</div>
<div style="position:absolute;left:798px;top:697px;width:103.5px;height:32.5px;box-sizing:border-box;border:2px solid #2f7fd0;background:#e3e3e3"></div>
<div style="position:absolute;left:798px;top:703.42px;font-size:16.8px;line-height:20.16px;color:#222;font-weight:normal;white-space:nowrap;width:103.5px;text-align:center;">确定</div>
<div style="position:absolute;left:917px;top:697px;width:103.5px;height:32.5px;box-sizing:border-box;border:1px solid #b9b9b9;background:#e1e1e1"></div>
<div style="position:absolute;left:917px;top:703.42px;font-size:16.8px;line-height:20.16px;color:#222;font-weight:normal;white-space:nowrap;width:103.5px;text-align:center;">取消</div>
<svg style="position:absolute;left:688px;top:670px;" width="80" height="12" viewBox="0 0 80 12"><path d="M5 6 C22 5.5 50 4.5 70 6.5" fill="none" stroke="#e0221b" stroke-width="3.2" stroke-linecap="round"/><path d="M62 6 C66 6.5 72 7 75 7.5" fill="none" stroke="#e0221b" stroke-width="4" stroke-linecap="round"/></svg>
<svg style="position:absolute;left:530px;top:570px;" width="90" height="130" viewBox="0 0 90 130"><g fill="#f01c14" stroke="#f01c14" stroke-width="1" stroke-linejoin="round"><path d="M15 36.2 L60 21 L59 16 L76 20.8 L63 33 L63 28.5 L15.5 37.8 Z"/><path d="M10 124.3 L60 110.8 L59 105.4 L77 110.4 L63.8 121.3 L63.5 117.5 L10.5 126 Z"/></g></svg>
<div style="position:absolute;left:848px;top:797.40px;font-size:28.5px;line-height:34.20px;color:#fdfdfd;font-weight:normal;white-space:nowrap;text-shadow:-1px 1.3px 1.1px rgba(60,60,60,0.8);"><span style="font-size:31px;letter-spacing:1px">知乎</span> <span style="letter-spacing:0.85px;margin-left:6px">@GIL214</span></div>
<div style="position:absolute;left:0px;top:846px;width:1080px;height:13px;background:#e6e6e6"></div>
<div style="position:absolute;left:0px;top:845.8px;width:1080px;height:1px;background:#b5b5b5"></div>
<div style="position:absolute;left:0px;top:839px;width:27px;height:7px;background:#e6e6e6"></div>
<div style="position:absolute;left:18.8px;top:855.0px;width:0;height:0;border-left:0.0px solid transparent;border-right:0.0px solid transparent;border-top:0px solid #777;"></div>
<svg style="position:absolute;left:14px;top:855px;" width="40" height="10" viewBox="0 0 40 10"><path d="M8 1 L3 6 L8 11 Z" fill="#3b5a48"/><path d="M33 1 L38 6 L33 11 Z" fill="#c4c4c4"/></svg>
<div style="position:absolute;left:96.25px;top:848px;width:1px;height:11px;background:#9a9a9a"></div>
<div style="position:absolute;left:183.75px;top:848px;width:1px;height:11px;background:#9a9a9a"></div>
<div style="position:absolute;left:271.25px;top:848px;width:1px;height:11px;background:#9a9a9a"></div>
<div style="position:absolute;left:358px;top:848px;width:1px;height:11px;background:#9a9a9a"></div>
<div style="position:absolute;left:445.5px;top:848px;width:1px;height:11px;background:#9a9a9a"></div>
<div style="position:absolute;left:533px;top:848px;width:1px;height:11px;background:#9a9a9a"></div>
<div style="position:absolute;left:631.25px;top:848px;width:1px;height:11px;background:#9a9a9a"></div>
<div style="position:absolute;left:730px;top:848px;width:1px;height:11px;background:#9a9a9a"></div>
<div style="position:absolute;left:110px;top:847.90px;font-size:18.5px;line-height:22.20px;color:#333;font-weight:normal;white-space:nowrap;">Sheet3</div>
<div style="position:absolute;left:196.25px;top:847.90px;font-size:18.5px;line-height:22.20px;color:#333;font-weight:normal;white-space:nowrap;">Sheet4</div>
<div style="position:absolute;left:283.75px;top:847.90px;font-size:18.5px;line-height:22.20px;color:#333;font-weight:normal;white-space:nowrap;">Sheet5</div>
<div style="position:absolute;left:371.25px;top:847.90px;font-size:18.5px;line-height:22.20px;color:#333;font-weight:normal;white-space:nowrap;">Sheet6</div>
<div style="position:absolute;left:458.75px;top:847.90px;font-size:18.5px;line-height:22.20px;color:#333;font-weight:normal;white-space:nowrap;">Sheet7</div>
<div style="position:absolute;left:546.25px;top:847.90px;font-size:18.5px;line-height:22.20px;color:#333;font-weight:normal;white-space:nowrap;">Sheet10</div>
<div style="position:absolute;left:643.75px;top:847.90px;font-size:18.5px;line-height:22.20px;color:#333;font-weight:normal;white-space:nowrap;">Sheet11</div>
<div style="position:absolute;left:742.5px;top:847.90px;font-size:18.5px;line-height:22.20px;color:#333;font-weight:normal;white-space:nowrap;">Sheet12</div>
<div style="position:absolute;left:827px;top:845.8px;width:95px;height:14px;background:#fff"></div>
<div style="position:absolute;left:827px;top:846px;width:1px;height:13px;background:#b5b5b5"></div>
<div style="position:absolute;left:841.5px;top:847.90px;font-size:18.5px;line-height:22.20px;color:#217346;font-weight:normal;white-space:nowrap;">Sheet13</div>
<div style="position:absolute;left:925.7px;top:846.5px;width:160px;height:13px;background:#e9e9e9;box-sizing:border-box;border:1px solid #bdbdbd"></div>
<svg style="position:absolute;left:960px;top:850px;" width="24" height="9" viewBox="0 0 24 9"><circle cx="11.7" cy="10.5" r="9" fill="none" stroke="#b0b0b0" stroke-width="1.2"/></svg>
<div style="position:absolute;left:1064.5px;top:854px;width:2px;height:2px;background:#888;border-radius:50%"></div>
</body></html>
